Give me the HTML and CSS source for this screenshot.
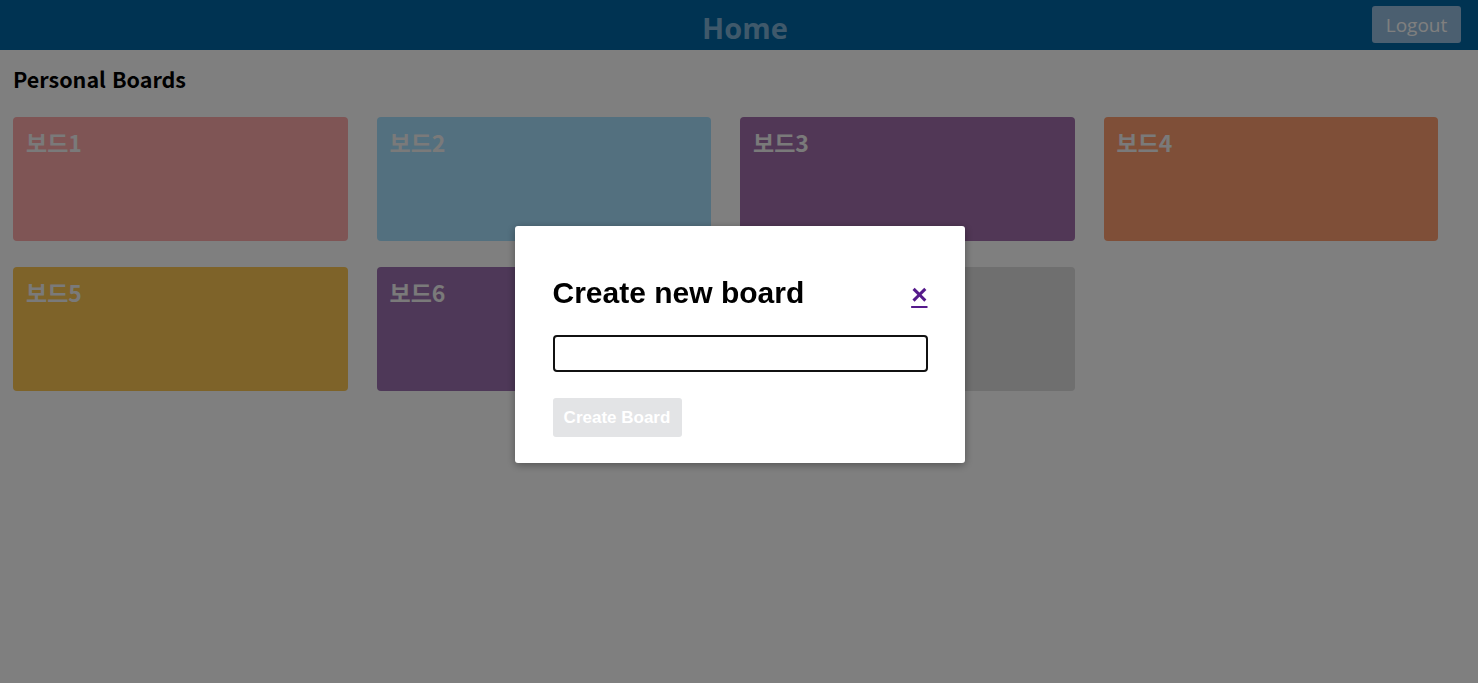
FILE: index.html
```html
<!DOCTYPE html>
<html lang="ko">
<head>
<meta charset="utf-8">
<title>Home</title>
<link rel="stylesheet" href="styles.css">
</head>
<body>
<header class="topbar">
  <h1 class="topbar-title">Home</h1>
  <button class="logout">Logout</button>
</header>
<main class="content">
  <h2 class="section-title">Personal Boards</h2>
  <div class="boards">
    <div class="board board-1"><span class="board-name">보드1</span></div>
    <div class="board board-2"><span class="board-name">보드2</span></div>
    <div class="board board-3"><span class="board-name">보드3</span></div>
    <div class="board board-4"><span class="board-name">보드4</span></div>
    <div class="board board-5"><span class="board-name">보드5</span></div>
    <div class="board board-6"><span class="board-name">보드6</span></div>
    <div class="board board-new"></div>
  </div>
</main>
<div class="overlay">
  <div class="modal">
    <div class="modal-head">
      <h3 class="modal-title">Create new board</h3>
      <a class="modal-close" href="#">×</a>
    </div>
    <input class="modal-input" type="text" autofocus>
    <button class="modal-btn">Create Board</button>
  </div>
</div>
</body>
</html>
```
FILE: styles.css
```css
html, body {
  margin: 0;
  padding: 0;
  background: #ffffff;
  height: 100%;
}
body {
  font-family: "Noto Sans", "Noto Sans CJK KR", sans-serif;
  overflow: hidden;
}
.topbar {
  height: 50px;
  background: #0066a4;
  display: flex;
  align-items: center;
  justify-content: center;
  position: relative;
}
.topbar-title {
  margin: 0;
  color: #7fb2d6;
  font-family: "Open Sans", "Noto Sans", sans-serif;
  font-weight: 700;
  font-size: 29px;
  line-height: 50px;
  padding: 3px 0 0 12px;
  box-sizing: border-box;
  height: 50px;
}
.logout {
  position: absolute;
  right: 17px;
  top: 6px;
  width: 89px;
  height: 37px;
  border: none;
  border-radius: 3px;
  background: #96bee0;
  color: #ffffff;
  font-family: "Open Sans", "Noto Sans", sans-serif;
  font-size: 19px;
  padding: 0;
}
.content {
  padding: 0 13px;
}
.section-title {
  margin: 0;
  padding-top: 15px;
  font-family: "Noto Sans CJK KR", "Noto Sans", sans-serif;
  font-weight: 700;
  font-size: 21.5px;
  line-height: 27px;
  color: #000;
}
.boards {
  display: grid;
  grid-template-columns: repeat(4, 334.5px);
  column-gap: 29px;
  row-gap: 26px;
  margin-top: 25px;
}
.board {
  height: 124px;
  border-radius: 4px;
  padding: 10px 13px;
  box-sizing: border-box;
}
.board-name {
  font-family: "Noto Sans CJK KR", "Noto Sans", sans-serif;
  font-weight: 700;
  font-size: 23px;
  line-height: 30px;
  color: #f4f4f4;
}
.board-1 { background: #ffaaaa; }
.board-2 { background: #a6e0ff; }
.board-3 { background: #a26eac; }
.board-4 { background: #ff9e70; }
.board-5 { background: #fcc652; }
.board-6 { background: #9c70b0; }
.board-new { background: #dedede; }
.overlay {
  position: fixed;
  inset: 0;
  background: rgba(0, 0, 0, 0.5);
  display: flex;
  justify-content: center;
  align-items: flex-start;
  padding: 226px 0 0 1px;
  box-sizing: border-box;
}
.modal {
  width: 450px;
  box-sizing: border-box;
  background: #fff;
  border-radius: 3px;
  padding: 48px 37px 26px 38px;
  box-shadow: 0 2px 8px rgba(0, 0, 0, 0.35);
  font-family: "Liberation Sans", Arial, sans-serif;
}
.modal-head {
  display: flex;
  justify-content: space-between;
  align-items: center;
}
.modal-title {
  margin: 0;
  font-size: 30px;
  line-height: 38px;
  font-weight: 700;
  color: #000;
}
.modal-close {
  color: #551a8b;
  font-size: 28px;
  font-weight: 700;
  line-height: 30px;
  margin-top: 4px;
}
.modal-input {
  display: block;
  width: 100%;
  height: 37px;
  box-sizing: border-box;
  margin-top: 23px;
  border: 2px solid #111;
  border-radius: 4px;
  outline: none;
  padding: 0 10px;
  font-size: 16px;
}
.modal-btn {
  margin-top: 26px;
  width: 129px;
  height: 39px;
  border: none;
  border-radius: 3px;
  background: #e3e4e6;
  color: #fff;
  font-family: "Liberation Sans", Arial, sans-serif;
  font-weight: 700;
  font-size: 17px;
  padding: 0;
}
```
